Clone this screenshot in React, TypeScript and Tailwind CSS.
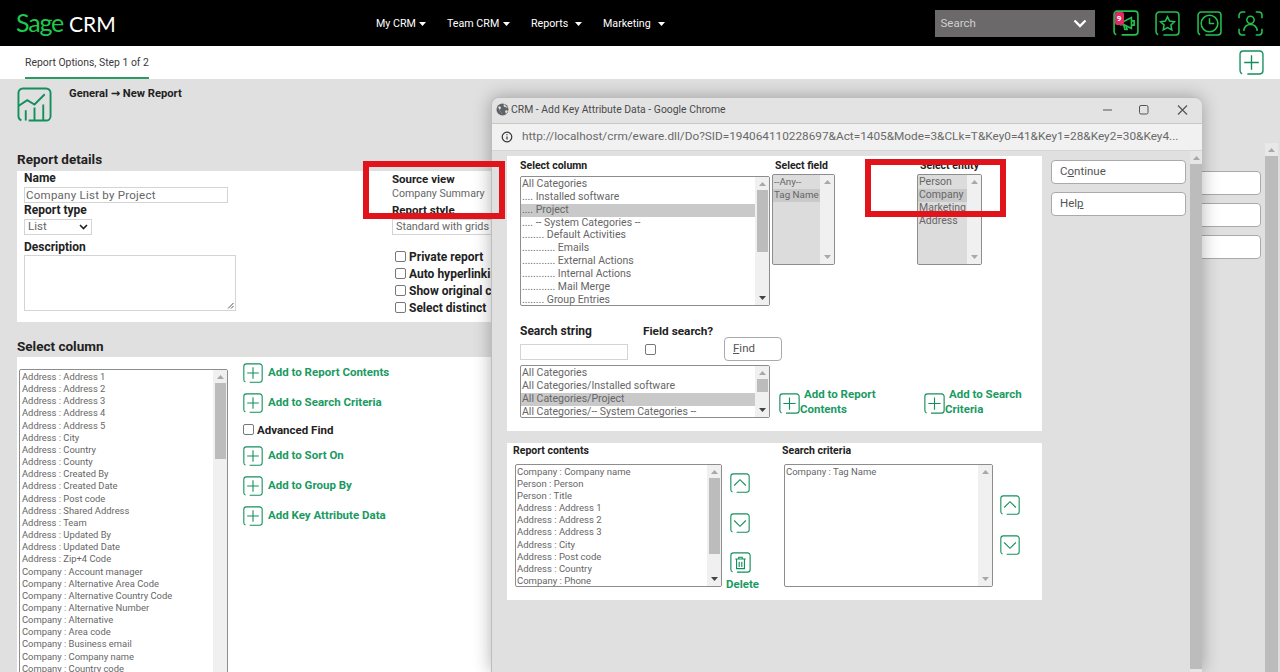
import type { ReactNode } from "react";

const columnItems = [
  "Address : Address 1",
  "Address : Address 2",
  "Address : Address 3",
  "Address : Address 4",
  "Address : Address 5",
  "Address : City",
  "Address : Country",
  "Address : County",
  "Address : Created By",
  "Address : Created Date",
  "Address : Post code",
  "Address : Shared Address",
  "Address : Team",
  "Address : Updated By",
  "Address : Updated Date",
  "Address : Zip+4 Code",
  "Company : Account manager",
  "Company : Alternative Area Code",
  "Company : Alternative Country Code",
  "Company : Alternative Number",
  "Company : Alternative",
  "Company : Area code",
  "Company : Business email",
  "Company : Company name",
  "Company : Country code",
];

const categoryItems = [
  "All Categories",
  ".... Installed software",
  ".... Project",
  ".... -- System Categories --",
  "........ Default Activities",
  "............ Emails",
  "............ External Actions",
  "............ Internal Actions",
  "............ Mail Merge",
  "........ Group Entries",
];

const pathItems = [
  "All Categories",
  "All Categories/Installed software",
  "All Categories/Project",
  "All Categories/-- System Categories --",
];

const reportItems = [
  "Company : Company name",
  "Person : Person",
  "Person : Title",
  "Address : Address 1",
  "Address : Address 2",
  "Address : Address 3",
  "Address : City",
  "Address : Post code",
  "Address : Country",
  "Company : Phone",
];

const FramedIcon = ({
  size,
  className,
  weight = 1.3,
  children,
}: {
  size: number;
  className: string;
  weight?: number;
  children?: ReactNode;
}) => (
  <svg width={size} height={size} viewBox="0 0 24 24" fill="none" stroke="currentColor" strokeWidth={weight} className={`shrink-0 ${className}`}>
    <path d="M8 23H20a3 3 0 0 0 3-3V4a3 3 0 0 0-3-3H4a3 3 0 0 0-3 3v16a3 3 0 0 0 2 2.8" />
    {children}
  </svg>
);

const Plus = () => <path d="M12 5v14M5 12h14" />;

const Arrow = ({ up, dark }: { up?: boolean; dark?: boolean }) => (
  <svg width="7" height="4" viewBox="0 0 7 4" className={dark ? "text-[#444]" : "text-[#a8a8a8]"} fill="currentColor">
    <path d={up ? "M3.5 0L7 4H0z" : "M0 0h7L3.5 4z"} />
  </svg>
);

const ListBox = ({
  items,
  selected,
  className,
  rowClass,
  thumbHeight,
  textClass = "text-[#666]",
  downDark = true,
  bgClass = "bg-white",
}: {
  items: string[];
  selected?: string;
  className: string;
  rowClass: string;
  thumbHeight?: string;
  textClass?: string;
  downDark?: boolean;
  bgClass?: string;
}) => (
  <div className={`flex overflow-hidden rounded-[2px] border border-[#8d8d8d] ${bgClass} ${className}`}>
    <div className="min-w-0 flex-1 overflow-hidden pt-[1px]">
      {items.map((item) => (
        <div key={item} className={`whitespace-nowrap pl-[1px] ${rowClass} ${textClass} ${item === selected ? "bg-[#c9c9c9]" : ""}`}>
          {item}
        </div>
      ))}
    </div>
    <div className="flex w-[14px] shrink-0 flex-col items-center bg-[#f0f0f0]">
      <div className="flex h-[13px] items-center justify-center">
        <Arrow up />
      </div>
      {thumbHeight && <div className={`w-[11px] bg-[#bcbcbc] ${thumbHeight}`} />}
      <div className="flex h-[13px] flex-1 items-end justify-center pb-[5px]">
        <Arrow dark={downDark} />
      </div>
    </div>
  </div>
);

const CheckBox = ({ className = "" }: { className?: string }) => (
  <span className={`block h-[11px] w-[11px] shrink-0 rounded-[2px] border border-[#777] bg-white ${className}`} />
);

const AddLink = ({ label }: { label: string }) => (
  <div className="flex h-[21px] items-center gap-[5px]">
    <FramedIcon size={20} className="text-[#128f5c]">
      <Plus />
    </FramedIcon>
    <span className="text-[11.5px] font-bold text-[#1a9a62]">{label}</span>
  </div>
);

const OptionRow = ({ label }: { label: string }) => (
  <div className="flex h-[17px] items-center gap-[3px] pl-[3px]">
    <CheckBox />
    <span className="whitespace-nowrap text-[12px] font-bold text-[#222]">{label}</span>
  </div>
);

const NavItem = ({ label, width }: { label: string; width: string }) => (
  <div className="flex items-center gap-[6px]">
    <span className={`whitespace-nowrap text-[10.7px] text-white ${width}`}>{label}</span>
    <svg width="7" height="4" viewBox="0 0 7 4" fill="white">
      <path d="M0 0h7L3.5 4z" />
    </svg>
  </div>
);

const HeaderIcons = () => (
  <div className="ml-[18px] flex items-center gap-[16.5px] text-[#22c04f]">
    <div className="relative">
      <FramedIcon size={26} className="" weight={1.5}>
        <path d="M7 10.5h3l7-3.5v10l-7-3.5H7zM10 14l1 4h2l-1-3.5M17 10h2.5v4H17" />
      </FramedIcon>
      <span className="absolute left-[2px] top-[2px] flex h-[13px] w-[9px] items-center justify-center rounded-[2px] bg-[#dd2a62] text-[8px] font-bold text-white">
        9
      </span>
    </div>
    <FramedIcon size={25} className="" weight={1.5}>
      <path d="M12 5.5l2 4.2 4.6.6-3.3 3.2.8 4.6-4.1-2.2-4.1 2.2.8-4.6-3.3-3.2 4.6-.6z" />
    </FramedIcon>
    <FramedIcon size={25} className="" weight={1.5}>
      <circle cx="12" cy="12" r="8" />
      <path d="M12 7v5h4.5" />
    </FramedIcon>
    <svg width="25" height="25" viewBox="0 0 24 24" fill="none" stroke="currentColor" strokeWidth={1.5}>
      <path d="M1 7V4a3 3 0 0 1 3-3h3M17 1h3a3 3 0 0 1 3 3v3M23 17v3a3 3 0 0 1-3 3h-3M7 23H4a3 3 0 0 1-3-3v-3" />
      <circle cx="12" cy="8.5" r="3.5" />
      <path d="M5.5 19c.5-4 3-6 6.5-6s6 2 6.5 6" />
    </svg>
  </div>
);

const PageHeader = () => (
  <header className="flex h-[46px] shrink-0 items-center bg-black pl-[16px] pr-[17px]">
    <div className="flex w-[360px] items-baseline gap-[6px] font-['Lato',sans-serif]">
      <span className="text-[25px] font-normal tracking-[-1.2px] text-[#1fc94f]">Sage</span>
      <span className="text-[21px] font-normal text-white">CRM</span>
    </div>
    <nav className="flex items-center gap-[21px] pt-[2px]">
      <NavItem label="My CRM" width="w-[37px]" />
      <NavItem label="Team CRM" width="w-[50px]" />
      <NavItem label="Reports" width="w-[38px]" />
      <NavItem label="Marketing" width="w-[49px]" />
    </nav>
    <div className="ml-auto flex h-[27px] w-[160px] items-center justify-between bg-[#6b6969] pl-[6px] pr-[8px]">
      <span className="pt-[1px] text-[11.5px] text-[#d0d0d0]">Search</span>
      <svg width="14" height="9" viewBox="0 0 14 9" fill="none" stroke="white" strokeWidth={2.4}>
        <path d="M1.5 1.5L7 7l5.5-5.5" />
      </svg>
    </div>
    <HeaderIcons />
  </header>
);

const SubHeader = () => (
  <div className="flex h-[33px] shrink-0 items-start justify-between bg-white pl-[25px] pr-[16px]">
    <div className="flex h-[33px] items-center border-b-2 border-[#2b9a63] pt-[2px]">
      <span className="text-[10.4px] text-[#3a3a3a]">Report Options, Step 1 of 2</span>
    </div>
    <FramedIcon size={25} className="mt-[4px] text-[#128f5c]">
      <Plus />
    </FramedIcon>
  </div>
);

const ReportDetails = () => (
  <div className="flex h-[151px] bg-white pl-[7px]">
    <div className="w-[368px]">
      <div className="h-[15px] text-[12px] font-bold leading-[14px] text-[#222]">Name</div>
      <div className="mt-[1px] h-[16px] w-[204px] border border-[#d4d4d4] pl-[1px] text-[11.5px] leading-[14px] tracking-[0.25px] text-[#666]">
        Company List by Project
      </div>
      <div className="h-[15px] text-[12px] font-bold leading-[14px] text-[#222]">Report type</div>
      <div className="mt-[1px] flex h-[16px] w-[68px] items-center justify-between border border-[#d4d4d4] px-[3px] text-[11.5px] text-[#666]">
        List
        <svg width="9" height="6" viewBox="0 0 9 6" fill="none" stroke="#222" strokeWidth={1.6}>
          <path d="M1 1l3.5 3.5L8 1" />
        </svg>
      </div>
      <div className="mt-[5px] h-[15px] text-[12px] font-bold leading-[14px] text-[#222]">Description</div>
      <div className="relative h-[56px] w-[212px] border border-[#d4d4d4]">
        <svg width="7" height="7" viewBox="0 0 7 7" className="absolute bottom-[1px] right-[1px]" stroke="#555" fill="none">
          <path d="M1 6.5L6.5 1M4 6.5L6.5 4" />
        </svg>
      </div>
    </div>
    <div className="w-[200px] pt-[1px]">
      <div className="text-[11.5px] font-bold leading-[14px] text-[#222]">Source view</div>
      <div className="text-[10.6px] leading-[15px] text-[#666]">Company Summary</div>
      <div className="mt-[2px] text-[11.5px] font-bold leading-[14px] text-[#222]">Report style</div>
      <div className="mt-[2px] flex h-[16px] items-center border border-[#d4d4d4] pl-[3px] text-[10.8px] text-[#666]">
        Standard with grids
      </div>
      <div className="mt-[13px]">
        <OptionRow label="Private report" />
        <OptionRow label="Auto hyperlinking" />
        <OptionRow label="Show original columns" />
        <OptionRow label="Select distinct" />
      </div>
    </div>
  </div>
);

const SelectColumn = () => (
  <div className="flex h-[330px] bg-white pl-[2px] pt-[12px]">
    <ListBox
      items={columnItems}
      className="h-[320px] w-[209px] shrink-0"
      rowClass="pl-[2px] text-[9.4px] leading-[12.15px]"
      thumbHeight="h-[76px]"
    />
    <div className="ml-[15px] flex flex-col gap-[9px]">
      <div className="-mt-[7px]">
        <AddLink label="Add to Report Contents" />
      </div>
      <AddLink label="Add to Search Criteria" />
      <div className="mb-[-1px] mt-[3px] flex h-[12px] items-center gap-[3px]">
        <CheckBox className="-mt-[3px]" />
        <span className="text-[11.5px] font-bold text-[#222]">Advanced Find</span>
      </div>
      <AddLink label="Add to Sort On" />
      <AddLink label="Add to Group By" />
      <AddLink label="Add Key Attribute Data" />
    </div>
  </div>
);

const FakeButton = ({ label, className = "" }: { label?: ReactNode; className?: string }) => (
  <div className={`flex items-center rounded-[4px] border border-[#aaa] bg-white pl-[8px] text-[11.5px] text-[#555] ${className}`}>{label}</div>
);

const ArrowButton = ({ up }: { up?: boolean }) => (
  <FramedIcon size={20} className="text-[#128f5c]">
    <path d={up ? "M5 15l7-7 7 7" : "M5 9l7 7 7-7"} />
  </FramedIcon>
);

const AddWrapped = ({ first, second }: { first: string; second: string }) => (
  <div className="flex items-end">
    <FramedIcon size={21} className="mb-[4px] text-[#128f5c]">
      <Plus />
    </FramedIcon>
    <div className="mb-[1px] whitespace-nowrap text-[11.5px] font-bold leading-[15px] text-[#1a9a62]">
      <div className="pl-[4px]">{first}</div>
      <div>{second}</div>
    </div>
  </div>
);

const PopupWindow = () => (
  <div className="absolute left-[491px] top-[97px] flex h-[575px] w-[711px] flex-col overflow-hidden rounded-t-[8px] border-l border-t border-[#bdbdbd] bg-[#e0e0e0] shadow-[0_0_18px_rgba(0,0,0,0.3)]">
    <div className="flex h-[26px] shrink-0 items-center border-b border-[#c8c8c8] bg-[#e3e3e3] pb-[2px] pl-[4px] pr-[14px]">
      <svg width="13" height="13" viewBox="0 0 13 13" className="mr-[2px] shrink-0">
        <circle cx="6.5" cy="6.5" r="6" fill="#5f6368" />
        <path d="M2 4c2-1 3 0 3 1s-2 1-1 3 2 1 2 3M8 1c-1 2 0 3 1 3s2 1 3 1M9 8c1-1 2-1 3 0l-2 3z" fill="#e3e3e3" />
      </svg>
      <span className="text-[10.4px] text-[#4a4a4a]">CRM - Add Key Attribute Data - Google Chrome</span>
      <svg width="85" height="12" viewBox="0 0 85 12" fill="none" stroke="#555" className="ml-auto">
        <path d="M0 6h9" strokeWidth={1.2} />
        <rect x="36.5" y="1.5" width="8.5" height="8.5" rx="1.5" />
        <path d="M75 1.5l9 9M84 1.5l-9 9" strokeWidth={1.2} />
      </svg>
    </div>
    <div className="flex h-[27px] shrink-0 items-center overflow-hidden border-b border-[#d6d6d6] bg-[#f1f1f1] pl-[9px]">
      <svg width="12" height="12" viewBox="0 0 12 12" fill="none" stroke="#333" className="mr-[9px] shrink-0">
        <circle cx="6" cy="6" r="4.8" strokeWidth={1.2} />
        <path d="M6 5.5v3M6 3.2v1" strokeWidth={1.2} />
      </svg>
      <span className="whitespace-nowrap text-[11.8px] text-[#6a6a6a]">
        http://localhost/crm/eware.dll/Do?SID=194064110228697&Act=1405&Mode=3&CLk=T&Key0=41&Key1=28&Key2=30&Key4...
      </span>
    </div>
    <div className="flex min-h-0 flex-1">
      <div className="w-[559px] shrink-0 pl-[15px] pt-[5px]">
        <div className="h-[275px] w-[535px] bg-white pl-[13px] pt-[4px]">
          <div className="flex">
            <div className="w-[250px]">
              <div className="h-[16px] text-[10.5px] font-bold leading-[12px] text-[#222]">Select column</div>
              <ListBox
                items={categoryItems}
                selected=".... Project"
                className="h-[130px]"
                rowClass="text-[10.5px] leading-[12.85px]"
                thumbHeight="h-[62px]"
              />
            </div>
            <div className="ml-[2px] w-[63px]">
              <div className="h-[14px] pl-[3px] text-[10.5px] font-bold leading-[12px] text-[#222]">Select field</div>
              <ListBox
                items={["--Any--", "Tag Name"]}
                selected="Tag Name"
                bgClass="bg-[#dcdcdc]"
                className="h-[91px]"
                rowClass="text-[9.8px] leading-[12.85px]"
                downDark={false}
              />
            </div>
            <div className="ml-[82px] w-[65px]">
              <div className="h-[14px] pl-[3px] text-[10.5px] font-bold leading-[12px] text-[#222]">Select entity</div>
              <ListBox
                items={["Person", "Company", "Marketing", "Address"]}
                selected="Company"
                bgClass="bg-[#dcdcdc]"
                className="h-[91px]"
                rowClass="text-[10.5px] leading-[12.85px]"
                downDark={false}
              />
            </div>
          </div>
          <div className="mt-[18px] flex h-[37px]">
            <div className="w-[123px]">
              <div className="h-[14px] text-[12px] font-bold leading-[14px] text-[#222]">Search string</div>
              <div className="mt-[6px] h-[16px] w-[108px] border border-[#d4d4d4]" />
            </div>
            <div className="w-[81px]">
              <div className="h-[14px] text-[11.8px] font-bold leading-[14px] text-[#222]">Field search?</div>
              <CheckBox className="ml-[2px] mt-[6px]" />
            </div>
            <FakeButton
              label={
                <span>
                  <span className="underline">F</span>ind
                </span>
              }
              className="mt-[13px] h-[24px] w-[58px]"
            />
          </div>
          <div className="mt-[4px] flex">
            <ListBox
              items={pathItems}
              selected="All Categories/Project"
              className="h-[53px] w-[250px] shrink-0"
              rowClass="text-[10.5px] leading-[12.85px]"
              thumbHeight="h-[13px]"
            />
            <div className="ml-[9px] flex w-[145px] items-end">
              <AddWrapped first="Add to Report" second="Contents" />
            </div>
            <div className="flex items-end">
              <AddWrapped first="Add to Search" second="Criteria" />
            </div>
          </div>
        </div>
        <div className="mt-[12px] h-[157px] w-[535px] bg-white pl-[6px] pt-[2px]">
          <div className="flex h-[14px] text-[10.5px] font-bold leading-[12px] text-[#222]">
            <div className="w-[269px]">Report contents</div>
            <div>Search criteria</div>
          </div>
          <div className="mt-[5px] flex pl-[2px]">
            <ListBox
              items={reportItems}
              className="h-[123px] w-[207px] shrink-0"
              rowClass="pl-[1px] text-[9.5px] leading-[12.1px]"
              thumbHeight="h-[76px]"
            />
            <div className="ml-[8px] flex w-[54px] flex-col pt-[9px]">
              <ArrowButton up />
              <div className="mt-[20px]">
                <ArrowButton />
              </div>
              <div className="mt-[19px]">
                <FramedIcon size={21} className="text-[#128f5c]">
                  <path d="M6 8h12M10 8V6h4v2M7.5 8v11h9V8M10.5 11v6M13.5 11v6" />
                </FramedIcon>
              </div>
              <div className="-ml-[4px] mt-[4px] text-[11.5px] font-bold leading-[14px] text-[#1a9a62]">Delete</div>
            </div>
            <ListBox
              items={["Company : Tag Name"]}
              className="h-[123px] w-[209px] shrink-0"
              rowClass="pl-[1px] text-[9.5px] leading-[12.1px]"
              downDark={false}
            />
            <div className="ml-[7px] flex flex-col gap-[20px] pt-[31px]">
              <ArrowButton up />
              <ArrowButton />
            </div>
          </div>
        </div>
      </div>
      <div className="w-[135px] shrink-0 pt-[9px]">
        <FakeButton
          label={
            <span>
              C<span className="underline">o</span>ntinue
            </span>
          }
          className="h-[24px] w-[135px]"
        />
        <FakeButton
          label={
            <span>
              Hel<span className="underline">p</span>
            </span>
          }
          className="mt-[8px] h-[24px] w-[135px]"
        />
      </div>
      <div className="ml-[4px] flex w-[12px] shrink-0 flex-col items-center bg-[#e6e6e6]">
        <div className="flex h-[13px] items-center">
          <Arrow up />
        </div>
        <div className="h-[505px] w-full bg-[#bcbcbc]" />
      </div>
    </div>
  </div>
);

const RedMark = ({ className }: { className: string }) => <div className={`absolute border-[6px] border-[#e0141a] ${className}`} />;

const App = () => (
  <div className="relative flex h-[672px] w-[1280px] flex-col overflow-hidden bg-[#e0e0e0] font-['Roboto',sans-serif]">
    <PageHeader />
    <SubHeader />
    <div className="flex min-h-0 flex-1 pl-[17px]">
      <div className="w-[1060px] shrink-0">
        <div className="flex items-start pt-[8px]">
          <FramedIcon size={35} className="text-[#128f5c]">
            <path d="M1 13l6-4 5 3 7-7M6 23v-7M12 23v-9M18 23v-11" />
          </FramedIcon>
          <span className="ml-[17px] text-[11.2px] font-bold leading-[14px] text-[#222]">
            General <span className="font-['DejaVu_Sans',sans-serif]">→</span> New Report
          </span>
        </div>
        <div className="mt-[29px] h-[20px] text-[13.5px] font-bold leading-[16px] text-[#222]">Report details</div>
        <ReportDetails />
        <div className="mt-[16px] h-[19px] text-[13.5px] font-bold leading-[16px] text-[#222]">Select column</div>
        <SelectColumn />
      </div>
      <div className="ml-[50px] w-[134px] shrink-0 pt-[92px]">
        <FakeButton className="h-[24px]" />
        <FakeButton className="mt-[8px] h-[24px]" />
        <FakeButton className="mt-[8px] h-[24px]" />
      </div>
      <div className="ml-[4px] mt-[64px] flex w-[13px] shrink-0 flex-col items-center bg-[#e8e8e8]">
        <div className="flex h-[13px] items-center">
          <Arrow up />
        </div>
        <div className="w-full flex-1 bg-[#bcbcbc]" />
      </div>
    </div>
    <PopupWindow />
    <RedMark className="left-[363px] top-[161px] h-[58px] w-[142px]" />
    <RedMark className="left-[865px] top-[159px] h-[58px] w-[141px]" />
  </div>
);

export default App;
